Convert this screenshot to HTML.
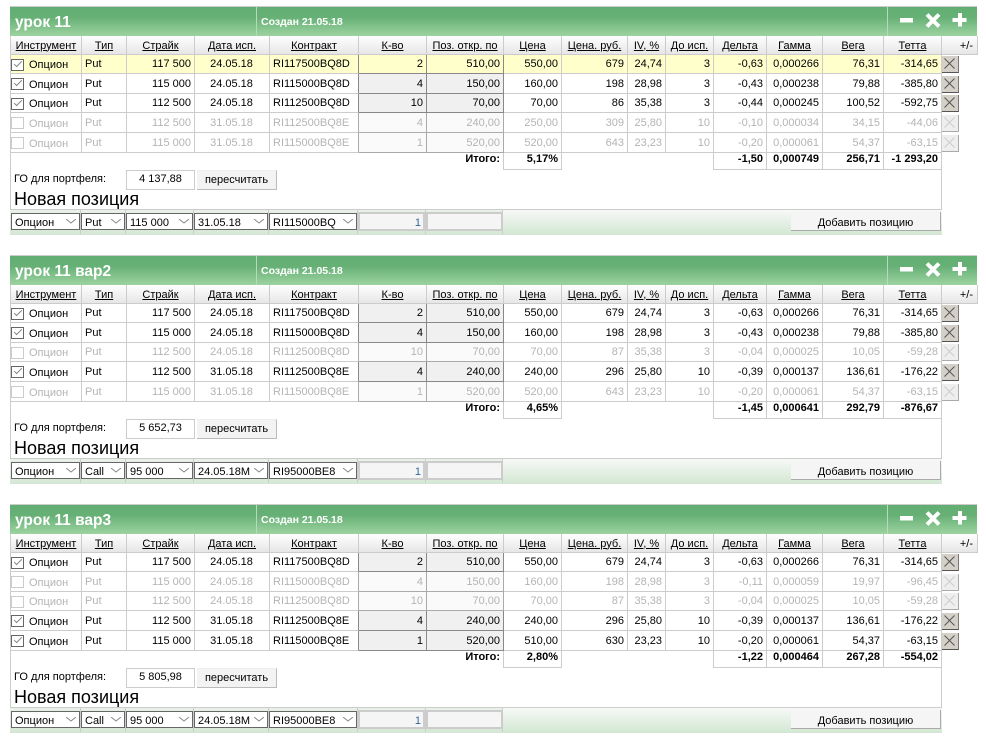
<!DOCTYPE html>
<html><head><meta charset="utf-8"><style>
html,body{margin:0;padding:0;background:#fff;width:986px;height:736px;overflow:hidden}
body{font-family:"Liberation Sans",Arial,sans-serif;font-size:11px;color:#000;position:relative}
.p{position:absolute;left:0;width:986px;height:240px}
.p div{position:absolute}
.bar{left:10px;top:6px;width:967px;height:29px;border-top:1px solid #ccc;background:linear-gradient(#62ae72 0,#66b076 35%,#9dd3a0 100%)}
.t1{left:15px;top:15px;font-size:15.5px;font-weight:bold;color:#fff;line-height:16px;white-space:nowrap}
.t2{left:261px;top:16px;font-size:10.5px;font-weight:bold;color:#fff;line-height:12px;white-space:nowrap}
.s1{left:256px;top:7px;width:1px;height:29px;background:#b9d9bd}
.s2{left:887px;top:7px;width:1px;height:29px;background:#b9d9bd}
svg.ic{position:absolute;left:895px;top:10px}
table{position:absolute;left:10px;top:36px;width:968px;table-layout:fixed;border-collapse:separate;border-spacing:0}
td,th{box-sizing:border-box;border-right:1px solid #ccc;border-bottom:1px solid #ccc;padding:0 3px 0 2px;font-weight:normal;font-size:11px;text-align:right;white-space:nowrap;overflow:hidden;line-height:12px}
th{height:19px;text-align:center;background:linear-gradient(#fff,#e6e6e6);text-decoration:underline;padding:1px 0 0}
th.f{border-left:1px solid #ccc}
th.n{text-decoration:none;text-align:right;padding-right:4px}
td.f{border-left:1px solid #ccc;text-align:left;padding:2px 0 0 18px;position:relative}
td.l{text-align:left;padding-left:3px}
td.m{text-align:center}
td.q{border-right-color:#888;border-bottom-color:#ccc}
td.k{background:#f0f0f0;border-right-color:#888;border-bottom-color:#888}
td.z{border:0;padding:0;vertical-align:bottom;background:#fff}
tr.u td{padding-top:1px}
tr.u td.f{padding-top:3px}
tr.u td.z{padding-top:0}
tr.y td{background:#ffc}
tr.y td.z{background:#fff}
tr.y td.k{background:#ffc}
tr.d td{color:#b4b4b4}
tr.d td.k{background:#fafafa;border-right-color:#aaa;border-bottom-color:#aaa}
tr.d td.q{border-right-color:#aaa}
i.x{display:block;width:17px;height:17px;box-sizing:border-box;margin-bottom:1px;background-color:#d4d0c8;border-right:1px solid #777;border-bottom:1px solid #555}
i.x svg{display:block;stroke:#555}
tr.d i.x{background-color:#eee;border-right-color:#aaa;border-bottom-color:#aaa}
tr.d i.x svg{stroke:#ccc}
b.c{position:absolute;left:0;top:4px;width:13px;height:12px;box-sizing:border-box;border:1px solid #666;background:#fff}
b.c:after{content:"";position:absolute;left:2px;top:1px;width:7px;height:3px;border-left:1px solid #888;border-bottom:1px solid #888;transform:rotate(-45deg)}
tr.d b.c{border-color:#ccc}
tr.d b.c:after{display:none}
tr.t td{border:0;height:17px;background:#fff;font-weight:bold;vertical-align:top;padding-top:0;color:#000}
tr.t td.b{border-right:1px solid #ccc;border-bottom:1px solid #ccc}
tr.t td.r{border-right:1px solid #ccc}
.lb{left:10px;top:153px;width:1px;height:81px;background:#ccc}
.rb{left:941px;top:153px;width:1px;height:81px;background:#ccc}
.go{left:14px;top:173px;line-height:13px}
.gi{left:126px;top:170px;width:67px;height:18px;border:1px solid #ccc;background:#fff;text-align:center;line-height:17px}
.gb{left:197px;top:170px;width:79px;height:18px;background:#f3f3f3;border-right:1px solid #bbb;border-bottom:1px solid #bbb;border-top:1px solid #eee;text-align:center;line-height:19px}
.np{left:14px;top:189px;font-size:18px;line-height:20px;white-space:nowrap}
.nr{left:10px;top:209px;width:932px;height:24px;border-top:1px solid #ccc;border-bottom:1px solid #d5e5d5;background:linear-gradient(#f7f8f7,#d3e8d3)}
.nw{left:10px;top:210px;width:493px;height:24px;background:linear-gradient(#e9f1e9,#d6e8d6)}
.v{top:210px;width:1px;height:24px;background:#ccc}
.se{top:213px;height:15px;border:1px solid #666;background:#fff;line-height:18px;padding-left:3px;overflow:hidden;white-space:nowrap}
.se svg{position:absolute;right:3px;top:5px;background:#fff;box-shadow:-3px 0 0 #fff}
.in{top:212px;height:15px;border:2px solid #ccc;background:#f5f5f5;text-align:right;line-height:18px;color:#369;padding-right:2px}
.ad{left:791px;top:212px;width:149px;height:18px;background:#f5f5f5;border-right:1px solid #aaa;border-bottom:1px solid #aaa;text-align:center;line-height:22px}
</style></head><body>

<div class="p" style="top:0">
<div class="bar"></div><div class="s1"></div><div class="s2"></div>
<div class="t1">урок 11</div><div class="t2">Создан 21.05.18</div>
<svg class="ic" width="75" height="20" viewBox="0 0 75 20"><path d="M5 8h13v4.500H5z" fill="#fff"/><path d="M32 4.500l12 12M44 4.500l-12 12" stroke="#fff" stroke-width="4" fill="none"/><path d="M63 3h4v5h4.500v4H67v4.500h-4V12h-5.500V8H63z" fill="#fff"/></svg>
<table><colgroup><col style="width:72px"><col style="width:45px"><col style="width:68px"><col style="width:75px"><col style="width:89px"><col style="width:68px"><col style="width:77px"><col style="width:58px"><col style="width:66px"><col style="width:38px"><col style="width:48px"><col style="width:53px"><col style="width:56px"><col style="width:61px"><col style="width:58px"><col style="width:36px"></colgroup>
<tr><th class="f">Инструмент</th><th>Тип</th><th>Страйк</th><th>Дата исп.</th><th>Контракт</th><th>К-во</th><th>Поз. откр. по</th><th>Цена</th><th>Цена. руб.</th><th>IV, %</th><th>До исп.</th><th>Дельта</th><th>Гамма</th><th>Вега</th><th>Тетта</th><th class="n">+/-</th></tr>
<tr class="y" style="height:19px"><td class="f"><b class="c"></b>Опцион</td><td class="l">Put</td><td>117 500</td><td class="m">24.05.18</td><td class="l q">RI117500BQ8D</td><td class="k">2</td><td class="k">510,00</td><td>550,00</td><td>679</td><td>24,74</td><td>3</td><td>-0,63</td><td>0,000266</td><td>76,31</td><td>-314,65</td><td class="z"><i class="x"><svg width="16" height="16"><path d="M2.500 2.500l10 10M12.500 2.500l-10 10" fill="none"/></svg></i></td></tr>
<tr class="u" style="height:20px"><td class="f"><b class="c"></b>Опцион</td><td class="l">Put</td><td>115 000</td><td class="m">24.05.18</td><td class="l q">RI115000BQ8D</td><td class="k">4</td><td class="k">150,00</td><td>160,00</td><td>198</td><td>28,98</td><td>3</td><td>-0,43</td><td>0,000238</td><td>79,88</td><td>-385,80</td><td class="z"><i class="x"><svg width="16" height="16"><path d="M2.500 2.500l10 10M12.500 2.500l-10 10" fill="none"/></svg></i></td></tr>
<tr style="height:19px"><td class="f"><b class="c"></b>Опцион</td><td class="l">Put</td><td>112 500</td><td class="m">24.05.18</td><td class="l q">RI112500BQ8D</td><td class="k">10</td><td class="k">70,00</td><td>70,00</td><td>86</td><td>35,38</td><td>3</td><td>-0,44</td><td>0,000245</td><td>100,52</td><td>-592,75</td><td class="z"><i class="x"><svg width="16" height="16"><path d="M2.500 2.500l10 10M12.500 2.500l-10 10" fill="none"/></svg></i></td></tr>
<tr class="d u" style="height:20px"><td class="f"><b class="c"></b>Опцион</td><td class="l">Put</td><td>112 500</td><td class="m">31.05.18</td><td class="l q">RI112500BQ8E</td><td class="k">4</td><td class="k">240,00</td><td>250,00</td><td>309</td><td>25,80</td><td>10</td><td>-0,10</td><td>0,000034</td><td>34,15</td><td>-44,06</td><td class="z"><i class="x"><svg width="16" height="16"><path d="M2.500 2.500l10 10M12.500 2.500l-10 10" fill="none"/></svg></i></td></tr>
<tr class="d" style="height:20px"><td class="f"><b class="c"></b>Опцион</td><td class="l">Put</td><td>115 000</td><td class="m">31.05.18</td><td class="l q">RI115000BQ8E</td><td class="k">1</td><td class="k">520,00</td><td>520,00</td><td>643</td><td>23,23</td><td>10</td><td>-0,20</td><td>0,000061</td><td>54,37</td><td>-63,15</td><td class="z"><i class="x"><svg width="16" height="16"><path d="M2.500 2.500l10 10M12.500 2.500l-10 10" fill="none"/></svg></i></td></tr>
<tr class="t"><td colspan="6"></td><td class="r">Итого:</td><td class="b">5,17%</td><td colspan="3" class="r"></td><td class="b">-1,50</td><td class="b">0,000749</td><td class="b">256,71</td><td class="b">-1 293,20</td><td></td></tr>
</table>
<div class="lb"></div><div class="rb"></div>
<div class="go">ГО для портфеля:</div><div class="gi">4 137,88</div><div class="gb">пересчитать</div>
<div class="np">Новая позиция</div>
<div class="nr"></div><div class="nw"></div>
<div class="v" style="left:80px"></div><div class="v" style="left:125px"></div><div class="v" style="left:193px"></div><div class="v" style="left:268px"></div><div class="v" style="left:357px"></div><div class="v" style="left:425px"></div><div class="v" style="left:502px"></div>
<div class="se" style="left:11px;width:64px">Опцион<svg width="10" height="5"><path d="M0 0l5 4 5-4" stroke="#888" fill="none"/></svg></div>
<div class="se" style="left:81px;width:39px">Put<svg width="10" height="5"><path d="M0 0l5 4 5-4" stroke="#888" fill="none"/></svg></div>
<div class="se" style="left:126px;width:62px">115 000<svg width="10" height="5"><path d="M0 0l5 4 5-4" stroke="#888" fill="none"/></svg></div>
<div class="se" style="left:194px;width:69px">31.05.18<svg width="10" height="5"><path d="M0 0l5 4 5-4" stroke="#888" fill="none"/></svg></div>
<div class="se" style="left:269px;width:83px">RI115000BQ<svg width="10" height="5"><path d="M0 0l5 4 5-4" stroke="#888" fill="none"/></svg></div>
<div class="in" style="left:358px;width:61px">1</div><div class="in" style="left:426px;width:71px"></div>
<div class="ad">Добавить позицию</div>
</div>

<div class="p" style="top:249px">
<div class="bar"></div><div class="s1"></div><div class="s2"></div>
<div class="t1">урок 11 вар2</div><div class="t2">Создан 21.05.18</div>
<svg class="ic" width="75" height="20" viewBox="0 0 75 20"><path d="M5 8h13v4.500H5z" fill="#fff"/><path d="M32 4.500l12 12M44 4.500l-12 12" stroke="#fff" stroke-width="4" fill="none"/><path d="M63 3h4v5h4.500v4H67v4.500h-4V12h-5.500V8H63z" fill="#fff"/></svg>
<table><colgroup><col style="width:72px"><col style="width:45px"><col style="width:68px"><col style="width:75px"><col style="width:89px"><col style="width:68px"><col style="width:77px"><col style="width:58px"><col style="width:66px"><col style="width:38px"><col style="width:48px"><col style="width:53px"><col style="width:56px"><col style="width:61px"><col style="width:58px"><col style="width:36px"></colgroup>
<tr><th class="f">Инструмент</th><th>Тип</th><th>Страйк</th><th>Дата исп.</th><th>Контракт</th><th>К-во</th><th>Поз. откр. по</th><th>Цена</th><th>Цена. руб.</th><th>IV, %</th><th>До исп.</th><th>Дельта</th><th>Гамма</th><th>Вега</th><th>Тетта</th><th class="n">+/-</th></tr>
<tr style="height:19px"><td class="f"><b class="c"></b>Опцион</td><td class="l">Put</td><td>117 500</td><td class="m">24.05.18</td><td class="l q">RI117500BQ8D</td><td class="k">2</td><td class="k">510,00</td><td>550,00</td><td>679</td><td>24,74</td><td>3</td><td>-0,63</td><td>0,000266</td><td>76,31</td><td>-314,65</td><td class="z"><i class="x"><svg width="16" height="16"><path d="M2.500 2.500l10 10M12.500 2.500l-10 10" fill="none"/></svg></i></td></tr>
<tr style="height:20px"><td class="f"><b class="c"></b>Опцион</td><td class="l">Put</td><td>115 000</td><td class="m">24.05.18</td><td class="l q">RI115000BQ8D</td><td class="k">4</td><td class="k">150,00</td><td>160,00</td><td>198</td><td>28,98</td><td>3</td><td>-0,43</td><td>0,000238</td><td>79,88</td><td>-385,80</td><td class="z"><i class="x"><svg width="16" height="16"><path d="M2.500 2.500l10 10M12.500 2.500l-10 10" fill="none"/></svg></i></td></tr>
<tr class="d" style="height:19px"><td class="f"><b class="c"></b>Опцион</td><td class="l">Put</td><td>112 500</td><td class="m">24.05.18</td><td class="l q">RI112500BQ8D</td><td class="k">10</td><td class="k">70,00</td><td>70,00</td><td>87</td><td>35,38</td><td>3</td><td>-0,04</td><td>0,000025</td><td>10,05</td><td>-59,28</td><td class="z"><i class="x"><svg width="16" height="16"><path d="M2.500 2.500l10 10M12.500 2.500l-10 10" fill="none"/></svg></i></td></tr>
<tr style="height:20px"><td class="f"><b class="c"></b>Опцион</td><td class="l">Put</td><td>112 500</td><td class="m">31.05.18</td><td class="l q">RI112500BQ8E</td><td class="k">4</td><td class="k">240,00</td><td>240,00</td><td>296</td><td>25,80</td><td>10</td><td>-0,39</td><td>0,000137</td><td>136,61</td><td>-176,22</td><td class="z"><i class="x"><svg width="16" height="16"><path d="M2.500 2.500l10 10M12.500 2.500l-10 10" fill="none"/></svg></i></td></tr>
<tr class="d" style="height:20px"><td class="f"><b class="c"></b>Опцион</td><td class="l">Put</td><td>115 000</td><td class="m">31.05.18</td><td class="l q">RI115000BQ8E</td><td class="k">1</td><td class="k">520,00</td><td>520,00</td><td>643</td><td>23,23</td><td>10</td><td>-0,20</td><td>0,000061</td><td>54,37</td><td>-63,15</td><td class="z"><i class="x"><svg width="16" height="16"><path d="M2.500 2.500l10 10M12.500 2.500l-10 10" fill="none"/></svg></i></td></tr>
<tr class="t"><td colspan="6"></td><td class="r">Итого:</td><td class="b">4,65%</td><td colspan="3" class="r"></td><td class="b">-1,45</td><td class="b">0,000641</td><td class="b">292,79</td><td class="b">-876,67</td><td></td></tr>
</table>
<div class="lb"></div><div class="rb"></div>
<div class="go">ГО для портфеля:</div><div class="gi">5 652,73</div><div class="gb">пересчитать</div>
<div class="np">Новая позиция</div>
<div class="nr"></div><div class="nw"></div>
<div class="v" style="left:80px"></div><div class="v" style="left:125px"></div><div class="v" style="left:193px"></div><div class="v" style="left:268px"></div><div class="v" style="left:357px"></div><div class="v" style="left:425px"></div><div class="v" style="left:502px"></div>
<div class="se" style="left:11px;width:64px">Опцион<svg width="10" height="5"><path d="M0 0l5 4 5-4" stroke="#888" fill="none"/></svg></div>
<div class="se" style="left:81px;width:39px">Call<svg width="10" height="5"><path d="M0 0l5 4 5-4" stroke="#888" fill="none"/></svg></div>
<div class="se" style="left:126px;width:62px">95 000<svg width="10" height="5"><path d="M0 0l5 4 5-4" stroke="#888" fill="none"/></svg></div>
<div class="se" style="left:194px;width:69px">24.05.18M<svg width="10" height="5"><path d="M0 0l5 4 5-4" stroke="#888" fill="none"/></svg></div>
<div class="se" style="left:269px;width:83px">RI95000BE8<svg width="10" height="5"><path d="M0 0l5 4 5-4" stroke="#888" fill="none"/></svg></div>
<div class="in" style="left:358px;width:61px">1</div><div class="in" style="left:426px;width:71px"></div>
<div class="ad">Добавить позицию</div>
</div>

<div class="p" style="top:498px">
<div class="bar"></div><div class="s1"></div><div class="s2"></div>
<div class="t1">урок 11 вар3</div><div class="t2">Создан 21.05.18</div>
<svg class="ic" width="75" height="20" viewBox="0 0 75 20"><path d="M5 8h13v4.500H5z" fill="#fff"/><path d="M32 4.500l12 12M44 4.500l-12 12" stroke="#fff" stroke-width="4" fill="none"/><path d="M63 3h4v5h4.500v4H67v4.500h-4V12h-5.500V8H63z" fill="#fff"/></svg>
<table><colgroup><col style="width:72px"><col style="width:45px"><col style="width:68px"><col style="width:75px"><col style="width:89px"><col style="width:68px"><col style="width:77px"><col style="width:58px"><col style="width:66px"><col style="width:38px"><col style="width:48px"><col style="width:53px"><col style="width:56px"><col style="width:61px"><col style="width:58px"><col style="width:36px"></colgroup>
<tr><th class="f">Инструмент</th><th>Тип</th><th>Страйк</th><th>Дата исп.</th><th>Контракт</th><th>К-во</th><th>Поз. откр. по</th><th>Цена</th><th>Цена. руб.</th><th>IV, %</th><th>До исп.</th><th>Дельта</th><th>Гамма</th><th>Вега</th><th>Тетта</th><th class="n">+/-</th></tr>
<tr style="height:19px"><td class="f"><b class="c"></b>Опцион</td><td class="l">Put</td><td>117 500</td><td class="m">24.05.18</td><td class="l q">RI117500BQ8D</td><td class="k">2</td><td class="k">510,00</td><td>550,00</td><td>679</td><td>24,74</td><td>3</td><td>-0,63</td><td>0,000266</td><td>76,31</td><td>-314,65</td><td class="z"><i class="x"><svg width="16" height="16"><path d="M2.500 2.500l10 10M12.500 2.500l-10 10" fill="none"/></svg></i></td></tr>
<tr class="d u" style="height:20px"><td class="f"><b class="c"></b>Опцион</td><td class="l">Put</td><td>115 000</td><td class="m">24.05.18</td><td class="l q">RI115000BQ8D</td><td class="k">4</td><td class="k">150,00</td><td>160,00</td><td>198</td><td>28,98</td><td>3</td><td>-0,11</td><td>0,000059</td><td>19,97</td><td>-96,45</td><td class="z"><i class="x"><svg width="16" height="16"><path d="M2.500 2.500l10 10M12.500 2.500l-10 10" fill="none"/></svg></i></td></tr>
<tr class="d" style="height:19px"><td class="f"><b class="c"></b>Опцион</td><td class="l">Put</td><td>112 500</td><td class="m">24.05.18</td><td class="l q">RI112500BQ8D</td><td class="k">10</td><td class="k">70,00</td><td>70,00</td><td>87</td><td>35,38</td><td>3</td><td>-0,04</td><td>0,000025</td><td>10,05</td><td>-59,28</td><td class="z"><i class="x"><svg width="16" height="16"><path d="M2.500 2.500l10 10M12.500 2.500l-10 10" fill="none"/></svg></i></td></tr>
<tr style="height:20px"><td class="f"><b class="c"></b>Опцион</td><td class="l">Put</td><td>112 500</td><td class="m">31.05.18</td><td class="l q">RI112500BQ8E</td><td class="k">4</td><td class="k">240,00</td><td>240,00</td><td>296</td><td>25,80</td><td>10</td><td>-0,39</td><td>0,000137</td><td>136,61</td><td>-176,22</td><td class="z"><i class="x"><svg width="16" height="16"><path d="M2.500 2.500l10 10M12.500 2.500l-10 10" fill="none"/></svg></i></td></tr>
<tr style="height:20px"><td class="f"><b class="c"></b>Опцион</td><td class="l">Put</td><td>115 000</td><td class="m">31.05.18</td><td class="l q">RI115000BQ8E</td><td class="k">1</td><td class="k">520,00</td><td>510,00</td><td>630</td><td>23,23</td><td>10</td><td>-0,20</td><td>0,000061</td><td>54,37</td><td>-63,15</td><td class="z"><i class="x"><svg width="16" height="16"><path d="M2.500 2.500l10 10M12.500 2.500l-10 10" fill="none"/></svg></i></td></tr>
<tr class="t"><td colspan="6"></td><td class="r">Итого:</td><td class="b">2,80%</td><td colspan="3" class="r"></td><td class="b">-1,22</td><td class="b">0,000464</td><td class="b">267,28</td><td class="b">-554,02</td><td></td></tr>
</table>
<div class="lb"></div><div class="rb"></div>
<div class="go">ГО для портфеля:</div><div class="gi">5 805,98</div><div class="gb">пересчитать</div>
<div class="np">Новая позиция</div>
<div class="nr"></div><div class="nw"></div>
<div class="v" style="left:80px"></div><div class="v" style="left:125px"></div><div class="v" style="left:193px"></div><div class="v" style="left:268px"></div><div class="v" style="left:357px"></div><div class="v" style="left:425px"></div><div class="v" style="left:502px"></div>
<div class="se" style="left:11px;width:64px">Опцион<svg width="10" height="5"><path d="M0 0l5 4 5-4" stroke="#888" fill="none"/></svg></div>
<div class="se" style="left:81px;width:39px">Call<svg width="10" height="5"><path d="M0 0l5 4 5-4" stroke="#888" fill="none"/></svg></div>
<div class="se" style="left:126px;width:62px">95 000<svg width="10" height="5"><path d="M0 0l5 4 5-4" stroke="#888" fill="none"/></svg></div>
<div class="se" style="left:194px;width:69px">24.05.18M<svg width="10" height="5"><path d="M0 0l5 4 5-4" stroke="#888" fill="none"/></svg></div>
<div class="se" style="left:269px;width:83px">RI95000BE8<svg width="10" height="5"><path d="M0 0l5 4 5-4" stroke="#888" fill="none"/></svg></div>
<div class="in" style="left:358px;width:61px">1</div><div class="in" style="left:426px;width:71px"></div>
<div class="ad">Добавить позицию</div>
</div>

</body></html>
